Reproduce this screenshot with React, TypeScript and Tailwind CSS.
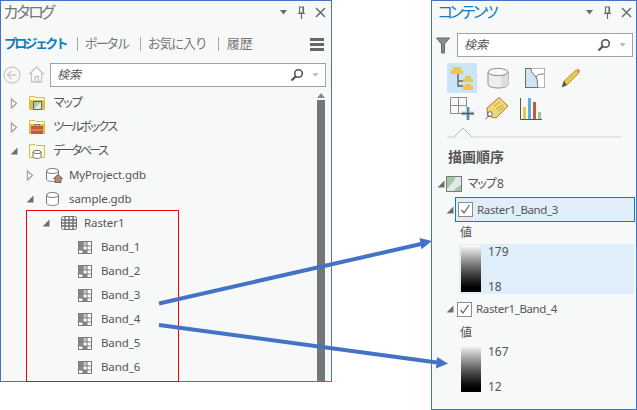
import type { ReactNode } from "react";

const font = "font-['Noto_Sans','Noto_Sans_CJK_JP',sans-serif]";

function Expanded() {
  return (
    <svg width="8" height="8" viewBox="0 0 8 8" className="block">
      <path d="M7.5 0.5V7.5H0.5Z" fill="#6e6e6e" />
    </svg>
  );
}

function Collapsed() {
  return (
    <svg width="8" height="11" viewBox="0 0 8 11" className="block">
      <path d="M1.5 1V10L6.5 5.5Z" fill="#fff" stroke="#a6a6a6" strokeWidth="1.4" />
    </svg>
  );
}

function PanelControls() {
  return (
    <div className="flex items-center gap-[9px]">
      <svg width="9" height="5" viewBox="0 0 9 5">
        <path d="M1 0H8L4.5 4.5Z" fill="#6a6a6a" />
      </svg>
      <svg width="9" height="13" viewBox="0 0 9 13">
        <path d="M2 1H7M2.5 1V7H6.5V1M6 1V7M1 7.5H8M4.5 8V13" fill="none" stroke="#6a6a6a" strokeWidth="1.2" />
      </svg>
      <svg width="11" height="11" viewBox="0 0 11 11">
        <path d="M1 1L10 10M10 1L1 10" fill="none" stroke="#6a6a6a" strokeWidth="1.5" />
      </svg>
    </div>
  );
}

function SearchBox({ className }: { className: string }) {
  return (
    <div className={`flex items-center bg-white border border-[#a3a3a3] ${className}`}>
      <span className="pl-[6px] text-[12px] italic text-[#555] flex-1">検索</span>
      <svg width="14" height="14" viewBox="0 0 14 14">
        <circle cx="8.5" cy="5.5" r="3.8" fill="none" stroke="#555" strokeWidth="1.6" />
        <path d="M5.8 8.2L1.5 12.5" stroke="#555" strokeWidth="2.2" />
      </svg>
      <svg width="7" height="4" viewBox="0 0 7 4" className="ml-[8px] mr-[6px]">
        <path d="M0.5 0H6.5L3.5 4Z" fill="#bdbdbd" />
      </svg>
    </div>
  );
}

function FolderIcon({ body, children }: { body: string; children?: ReactNode }) {
  return (
    <svg width="16" height="16" viewBox="0 0 16 16" className="block">
      <path d="M0.5 14.5V1.5H6L7 2.5H15.5V14.5Z" fill="#fbf6dc" stroke="#d6bd4e" />
      <rect x="1" y="4" width="14" height="1" fill="#ffffff" />
      <rect x="1" y="5" width="14" height="9" fill={body} />
      {children}
    </svg>
  );
}

function DbIcon() {
  return (
    <svg width="16" height="16" viewBox="0 0 16 16" className="block">
      <path d="M1.5 4V12C1.5 13.5 4.5 14.5 7.5 14.5S13.5 13.5 13.5 12V4" fill="#fff" stroke="#777" />
      <ellipse cx="7.5" cy="4" rx="6" ry="2.5" fill="#fff" stroke="#777" />
    </svg>
  );
}

function RasterIcon() {
  return (
    <svg width="16" height="14" viewBox="0 0 16 14" className="block">
      <rect x="0.5" y="0.5" width="15" height="13" rx="2" fill="#fff" stroke="#707070" />
      <path d="M4 1V13M8 1V13M12 1V13M1 4H15M1 7H15M1 10H15" stroke="#707070" strokeWidth="1.4" />
    </svg>
  );
}

function BandIcon() {
  return (
    <svg width="14" height="13" viewBox="0 0 14 13" className="block">
      <rect x="0.5" y="0.5" width="13" height="12" fill="#fff" stroke="#7a7a7a" />
      <rect x="1" y="1" width="4" height="8" fill="#8a8a8a" />
      <rect x="5" y="1" width="4" height="4" fill="#c8c8c8" />
      <rect x="5" y="9" width="4" height="3" fill="#8a8a8a" />
      <path d="M5 1V12M9 1V12M1 5H13M1 9H13" stroke="#7a7a7a" />
    </svg>
  );
}

function TreeRow({
  className,
  arrow,
  icon,
  children,
}: {
  className: string;
  arrow?: ReactNode;
  icon: ReactNode;
  children: ReactNode;
}) {
  return (
    <div className={`flex items-center h-6 text-[11.5px] tracking-[-0.1px] text-[#555] ${className}`}>
      <div className="w-[19px] flex items-center">{arrow}</div>
      <div className="w-[16px] flex items-center">{icon}</div>
      <div className="ml-[8px] whitespace-nowrap">{children}</div>
    </div>
  );
}

function Catalog() {
  const bands = ["Band_1", "Band_2", "Band_3", "Band_4", "Band_5", "Band_6"];
  return (
    <div className="w-[332px] h-[382px] border border-[#4472c4] bg-[#f7f9f9] flex flex-col">
      <div className="h-[22px] flex items-center justify-between pl-[2px] pr-[5px] shrink-0">
        <span className="text-[16px] text-[#777] tracking-[-3.5px]">カタログ</span>
        <PanelControls />
      </div>
      <div className="h-[34px] mt-[4px] flex items-center pl-[3px] pr-[7px] text-[13px] text-[#777] shrink-0">
        <span className="text-[#0f7cc0] font-semibold tracking-[-2.7px]">プロジェクト</span>
        <div className="w-px h-[14px] bg-[#aaa] ml-[11px] mr-[7px]" />
        <span className="tracking-[-2.3px]">ポータル</span>
        <div className="w-px h-[14px] bg-[#aaa] ml-[12px] mr-[7px]" />
        <span className="tracking-[-1.2px]">お気に入り</span>
        <div className="w-px h-[14px] bg-[#aaa] ml-[11px] mr-[8px]" />
        <span>履歴</span>
        <div className="ml-auto flex flex-col gap-[2px]">
          <div className="w-[14px] h-[3px] bg-[#666]" />
          <div className="w-[14px] h-[3px] bg-[#666]" />
          <div className="w-[14px] h-[3px] bg-[#666]" />
        </div>
      </div>
      <div className="h-[25px] mt-[1px] flex items-center pl-[2px] pr-[5px] shrink-0">
        <svg width="18" height="18" viewBox="0 0 18 18" className="shrink-0">
          <circle cx="9" cy="9" r="8" fill="none" stroke="#ccc" strokeWidth="1.3" />
          <path d="M13.5 9H5M8.5 5L4.5 9L8.5 13" fill="none" stroke="#ccc" strokeWidth="1.6" />
        </svg>
        <svg width="17" height="17" viewBox="0 0 17 17" className="ml-[7px] shrink-0">
          <path d="M1 8.5L8.5 1L16 8.5M3.5 7V16H13.5V7M7 16V10.5H10.5V16" fill="#fff" stroke="#c4c4c4" strokeWidth="1.3" />
        </svg>
        <SearchBox className="ml-[5px] flex-1 h-[24px]" />
      </div>
      <div className="flex-1 flex mt-[4px] min-h-0">
        <div className="flex-1">
          <TreeRow
            className="pl-[9px]"
            arrow={<Collapsed />}
            icon={
              <FolderIcon body="#d9c04a">
                <rect x="4.5" y="6.5" width="8" height="8" fill="#a9c9a4" stroke="#666" />
                <path d="M5 14L12 7V14Z" fill="#dfeaf0" />
              </FolderIcon>
            }
          >
            <span className="text-[12px] tracking-[-3px]">マップ</span>
          </TreeRow>
          <TreeRow
            className="pl-[9px]"
            arrow={<Collapsed />}
            icon={
              <FolderIcon body="#d9c04a">
                <rect x="2" y="7" width="12" height="8" fill="#c8583a" />
                <path d="M5.5 7V5.5H10.5V7" fill="none" stroke="#777" />
                <path d="M2 11H14" stroke="#e9a08c" />
              </FolderIcon>
            }
          >
            <span className="text-[12px] tracking-[-3px]">ツールボックス</span>
          </TreeRow>
          <TreeRow
            className="pl-[9px]"
            arrow={<Expanded />}
            icon={
              <FolderIcon body="#fbf6dc">
                <path d="M4 9V14C4 15 6 15.4 8 15.4S12 15 12 14V9" fill="#fff" stroke="#777" />
                <ellipse cx="8" cy="9" rx="4" ry="1.6" fill="#fff" stroke="#777" />
              </FolderIcon>
            }
          >
            <span className="text-[12px] tracking-[-3px]">データベース</span>
          </TreeRow>
          <TreeRow
            className="pl-[25px]"
            arrow={<Collapsed />}
            icon={
              <div className="relative">
                <DbIcon />
                <svg width="10" height="9" viewBox="0 0 10 9" className="absolute -right-[2px] bottom-0">
                  <path d="M0.5 4.5L5 0.5L9.5 4.5H8V8.5H2V4.5Z" fill="#b98a72" stroke="#666" />
                </svg>
              </div>
            }
          >
            MyProject.gdb
          </TreeRow>
          <TreeRow className="pl-[25px]" arrow={<Expanded />} icon={<DbIcon />}>
            sample.gdb
          </TreeRow>
          <div className="-mt-px ml-[25px] w-[153px] h-[172px] border border-[#ff0000]">
            <TreeRow className="pl-[15px]" arrow={<Expanded />} icon={<RasterIcon />}>
              <span className="-ml-px">Raster1</span>
            </TreeRow>
            {bands.map((b) => (
              <TreeRow key={b} className="pl-[32px]" icon={<BandIcon />}>
                <span className="-ml-px">{b}</span>
              </TreeRow>
            ))}
          </div>
        </div>
        <div className="w-[8px] mr-[6px] flex flex-col items-center">
          <svg width="8" height="5" viewBox="0 0 8 5" className="mt-[2px] shrink-0">
            <path d="M0 5L4 0L8 5Z" fill="#8a8a8a" />
          </svg>
          <div className="w-[8px] flex-1 mt-[2px] bg-[#767676]" />
        </div>
      </div>
    </div>
  );
}

function TocTools() {
  return (
    <div className="ml-[15px]">
      <div className="flex items-center">
        <div className="w-[30px] h-[30px] bg-[#cce4f7] flex items-center justify-center">
          <svg width="24" height="24" viewBox="0 0 24 24">
            <path d="M8 8V20H13M8 15H13" fill="none" stroke="#666" strokeWidth="1.4" />
            <path d="M3 1H11V4H13V8H1V4H3Z" fill="#e8c94c" />
            <path d="M15 10H21V13H23V16H13V13H15Z" fill="#e8c94c" />
            <path d="M15 18H21V20H23V24H13V20H15Z" fill="#e8c94c" />
          </svg>
        </div>
        <svg width="22" height="22" viewBox="0 0 22 22" className="ml-[10px]">
          <path d="M1 5V17C1 19.5 5.5 21 11 21S21 19.5 21 17V5Z" fill="#eee" stroke="#8c8c8c" />
          <path d="M14 20.5C18 20 21 19 21 17V6H14Z" fill="#dcdcdc" />
          <ellipse cx="11" cy="5" rx="10" ry="3.6" fill="#fafafa" stroke="#8c8c8c" />
        </svg>
        <svg width="20" height="20" viewBox="0 0 20 20" className="ml-[16px]">
          <rect x="0.5" y="0.5" width="19" height="19" fill="#cfe5f7" stroke="#6e6e6e" />
          <path d="M6 1C6 5 9 6 11 9C13 12 12 16 13 19.5H19.5V0.5H6Z" fill="#fff" />
          <path d="M6 1C6 5 9 6 11 9C13 12 12 16 13 19.5M11 9C13 6 16 6 19.5 6" fill="none" stroke="#6e6e6e" />
        </svg>
        <svg width="20" height="20" viewBox="0 0 20 20" className="ml-[16px]">
          <path d="M1 19L3 13L15 2L18 5L6 17Z" fill="#e8c94c" stroke="#a08a35" strokeWidth="0.8" />
          <path d="M15 2L17 0.5L19.5 3L18 5Z" fill="#e88a70" />
          <path d="M1 19L3 13L6 17Z" fill="#555" />
        </svg>
      </div>
      <div className="flex items-center mt-[4px]">
        <svg width="24" height="24" viewBox="0 0 24 24" className="ml-[3px]">
          <path d="M0.5 0.5H16.5V16.5H0.5ZM8.5 0.5V16.5M0.5 8.5H16.5" fill="none" stroke="#8c8c8c" />
          <path d="M18 10V23M11.5 16.5H24" stroke="#a8d5f5" strokeWidth="4" />
          <path d="M18 10V23M11.5 16.5H24" stroke="#555" strokeWidth="1.3" />
        </svg>
        <svg width="24" height="24" viewBox="0 0 24 24" className="ml-[11px]">
          <path d="M14 0.5L23 9L11 21L2.5 19L2 11Z" fill="#f1d676" stroke="#b0703a" />
          <path d="M9 9L15 5M11 12L18 8M13 14L19 10" stroke="#c9a94a" />
          <circle cx="5" cy="17" r="2.3" fill="#fff" stroke="#666" />
          <path d="M4 19L0.5 22" stroke="#666" />
        </svg>
        <svg width="22" height="22" viewBox="0 0 22 22" className="ml-[11px]">
          <path d="M0.5 0V21.5H22" fill="none" stroke="#555" />
          <rect x="3" y="9" width="3" height="12" fill="#e3c94c" />
          <rect x="8" y="0" width="3" height="21" fill="#5faee3" />
          <rect x="13" y="4" width="3" height="17" fill="#c8583a" />
          <rect x="18" y="14" width="3" height="7" fill="#9cc5a0" />
        </svg>
      </div>
    </div>
  );
}

function Legend({ max, min, className }: { max: string; min: string; className: string }) {
  return (
    <div className={`flex pl-[2px] pt-px pb-[2px] text-[12px] text-[#555] ${className}`}>
      <div className="w-[20px] h-[47px] bg-gradient-to-b from-white to-black" />
      <div className="ml-[7px] flex flex-col justify-between h-[49px] -mb-[2px] leading-[14px]">
        <span>{max}</span>
        <span>{min}</span>
      </div>
    </div>
  );
}

function LayerCheck() {
  return (
    <svg width="15" height="15" viewBox="0 0 15 15" className="block shrink-0">
      <rect x="0.5" y="0.5" width="14" height="14" fill="#fff" stroke="#8c8c8c" />
      <path d="M3.5 8L6 11L11.5 3" fill="none" stroke="#666" strokeWidth="1.3" />
    </svg>
  );
}

function Contents() {
  return (
    <div className="w-[206px] h-[410px] border border-[#4472c4] bg-[#f7f9f9] flex flex-col">
      <div className="h-[22px] flex items-center justify-between pl-[5px] pr-[4px] shrink-0">
        <span className="text-[16px] text-[#0f7cc0] tracking-[-4.4px]">コンテンツ</span>
        <PanelControls />
      </div>
      <div className="h-[24px] mt-[10px] flex items-center pl-[4px] pr-[3px] shrink-0">
        <svg width="14" height="17" viewBox="0 0 14 17" className="shrink-0">
          <path d="M0.5 1H13.5L8.5 7V16H5.5V7Z" fill="#8c8c8c" stroke="#666" />
        </svg>
        <SearchBox className="ml-[7px] flex-1 h-[24px]" />
      </div>
      <div className="mt-[6px]">
        <TocTools />
      </div>
      <div className="relative ml-[15px] mr-[15px] h-[2px] mt-[15px] bg-[#e4e6e6] shrink-0">
        <svg width="20" height="11" viewBox="0 0 20 11" className="absolute left-[6px] -top-[9px]">
          <path d="M0.5 10.5L10 1L19.5 10.5" fill="#f7f9f9" stroke="#8fc3ea" />
        </svg>
      </div>
      <div className="ml-[16px] mt-[10px] text-[14px] font-semibold text-[#555] leading-[18px]">描画順序</div>
      <div className="flex items-center h-[20px] mt-[8px] pl-[5px] text-[12px] text-[#555]">
        <Expanded />
        <svg width="16" height="16" viewBox="0 0 16 16" className="ml-[1px]">
          <rect x="0.5" y="0.5" width="15" height="15" fill="#dfeaf0" stroke="#7a7a7a" />
          <path d="M1 1H9C9 5 7 6 5 8C3 10 3 12 1 12ZM8 15C9 12 12 11 15 9V15Z" fill="#a3c79f" />
        </svg>
        <span className="ml-[5px] tracking-[-3px]">マップ</span>
        <span className="ml-[3px]">8</span>
      </div>
      <div className="flex items-center h-[25px] mt-[3px] ml-[23px] mr-[1px] bg-[#dfeef9] border border-[#0f7cc0] text-[11.5px] tracking-[-0.35px] text-[#555] relative">
        <div className="absolute -left-[10px] top-[8px]">
          <Expanded />
        </div>
        <div className="ml-[2px]">
          <LayerCheck />
        </div>
        <span className="ml-[4px]">Raster1_Band_3</span>
      </div>
      <div className="ml-[28px] mt-[2px] text-[12px] text-[#555] leading-[18px]">値</div>
      <Legend max="179" min="18" className="ml-[27px] mr-[2px] mt-[2px] bg-[#dfeef9]" />
      <div className="flex items-center h-[20px] mt-[5px] pl-[14px] text-[11.5px] tracking-[-0.35px] text-[#555]">
        <Expanded />
        <div className="ml-[3px]">
          <LayerCheck />
        </div>
        <span className="ml-[4px]">Raster1_Band_4</span>
      </div>
      <div className="ml-[28px] mt-[5px] text-[12px] text-[#555] leading-[18px]">値</div>
      <Legend max="167" min="12" className="ml-[27px] mr-[2px] mt-[2px]" />
    </div>
  );
}

export default function App() {
  return (
    <div className={`relative w-[637px] h-[410px] bg-white flex ${font}`}>
      <Catalog />
      <div className="ml-[99px]">
        <Contents />
      </div>
      <svg width="637" height="410" viewBox="0 0 637 410" className="absolute left-0 top-0 pointer-events-none">
        <path d="M159 303.5L421 244" stroke="#4472c4" strokeWidth="4" />
        <path d="M432 241L419.5 238L421.5 249.2Z" fill="#4472c4" />
        <path d="M159 325L437 362.5" stroke="#4472c4" strokeWidth="4" />
        <path d="M448 363.5L437 357L436 368.5Z" fill="#4472c4" />
      </svg>
    </div>
  );
}
